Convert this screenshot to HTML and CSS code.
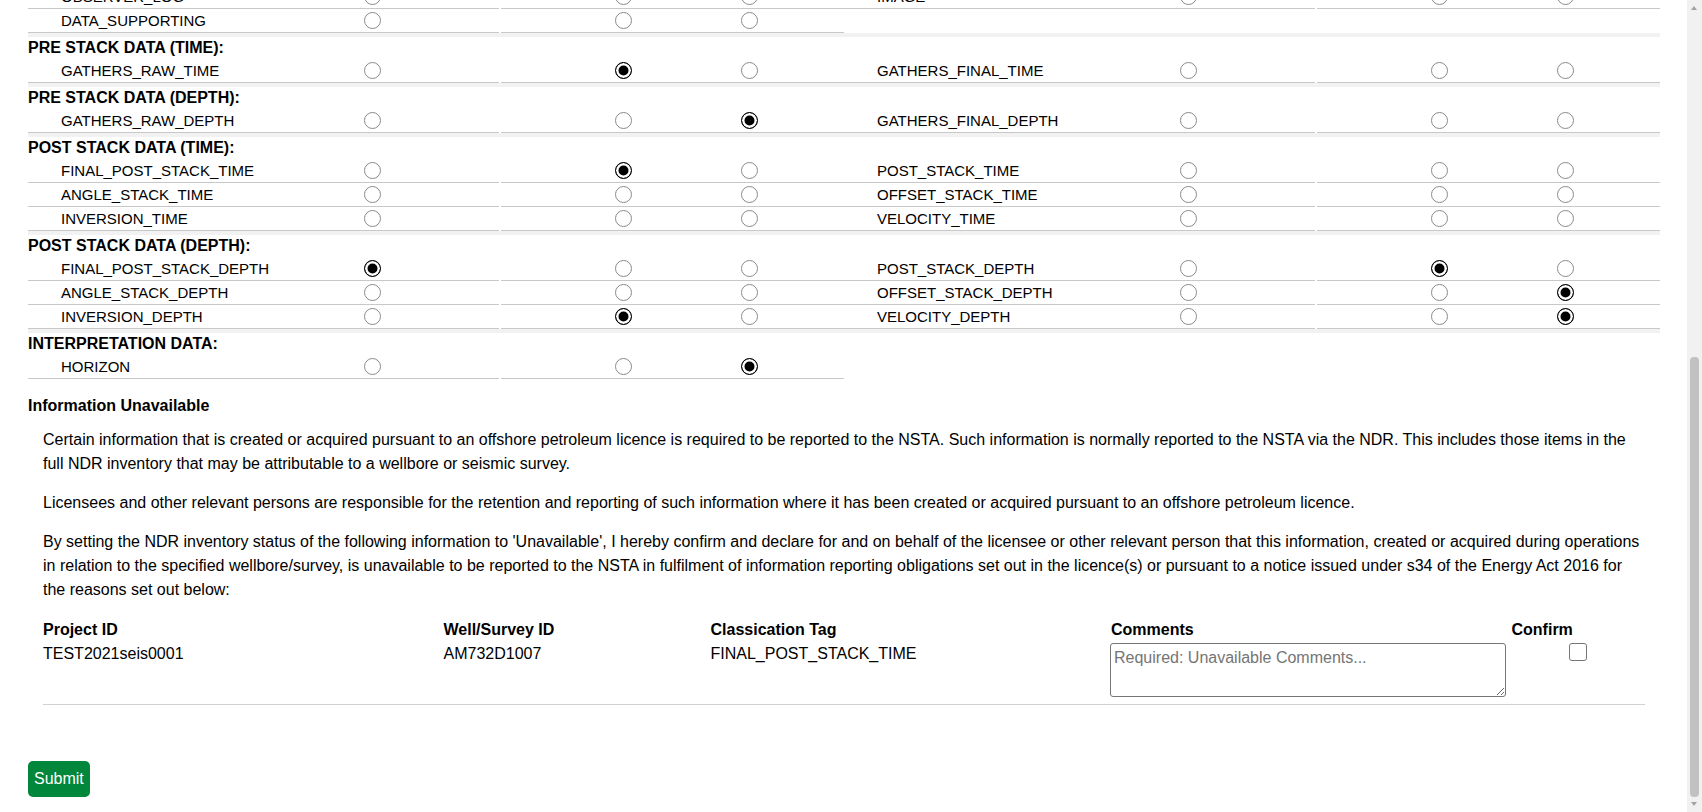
FILE: index.html
```html
<!DOCTYPE html>
<html lang="en">

<head>
  <meta charset="UTF-8" />
  <meta name="viewport" content="width=device-width, initial-scale=1.0" />
  <title>NDR Inventory</title>
  <link rel="stylesheet" href="styles.css">
</head>

<body>
  <div class="page">
    <!-- inventory status, scrolled part way down -->
    <div class="inventory">
      <section class="group group-cut">
        <div class="group-cols">
          <div class="col">
            <div class="row">
              <span class="label">OBSERVER_LOG</span>
              <span class="cell c1"><input class="radio" type="radio" name="obs"></span>
              <span class="cell c2"><input class="radio" type="radio" name="obs"></span>
              <span class="cell c3"><input class="radio" type="radio" name="obs"></span>
            </div>
            <div class="row">
              <span class="label">DATA_SUPPORTING</span>
              <span class="cell c1"><input class="radio" type="radio" name="ds"></span>
              <span class="cell c2"><input class="radio" type="radio" name="ds"></span>
              <span class="cell c3"><input class="radio" type="radio" name="ds"></span>
            </div>
          </div>
          <div class="col">
            <div class="row">
              <span class="label">IMAGE</span>
              <span class="cell c1"><input class="radio" type="radio" name="img"></span>
              <span class="cell c2"><input class="radio" type="radio" name="img"></span>
              <span class="cell c3"><input class="radio" type="radio" name="img"></span>
            </div>
          </div>
        </div>
      </section>

      <section class="group">
        <div class="group-title">PRE STACK DATA (TIME):</div>
        <div class="group-cols">
          <div class="col">
            <div class="row">
              <span class="label">GATHERS_RAW_TIME</span>
              <span class="cell c1"><input class="radio" type="radio" name="grt"></span>
              <span class="cell c2"><input class="radio" type="radio" name="grt" checked></span>
              <span class="cell c3"><input class="radio" type="radio" name="grt"></span>
            </div>
          </div>
          <div class="col">
            <div class="row">
              <span class="label">GATHERS_FINAL_TIME</span>
              <span class="cell c1"><input class="radio" type="radio" name="gft"></span>
              <span class="cell c2"><input class="radio" type="radio" name="gft"></span>
              <span class="cell c3"><input class="radio" type="radio" name="gft"></span>
            </div>
          </div>
        </div>
      </section>

      <section class="group">
        <div class="group-title">PRE STACK DATA (DEPTH):</div>
        <div class="group-cols">
          <div class="col">
            <div class="row">
              <span class="label">GATHERS_RAW_DEPTH</span>
              <span class="cell c1"><input class="radio" type="radio" name="grd"></span>
              <span class="cell c2"><input class="radio" type="radio" name="grd"></span>
              <span class="cell c3"><input class="radio" type="radio" name="grd" checked></span>
            </div>
          </div>
          <div class="col">
            <div class="row">
              <span class="label">GATHERS_FINAL_DEPTH</span>
              <span class="cell c1"><input class="radio" type="radio" name="gfd"></span>
              <span class="cell c2"><input class="radio" type="radio" name="gfd"></span>
              <span class="cell c3"><input class="radio" type="radio" name="gfd"></span>
            </div>
          </div>
        </div>
      </section>

      <section class="group">
        <div class="group-title">POST STACK DATA (TIME):</div>
        <div class="group-cols">
          <div class="col">
            <div class="row">
              <span class="label">FINAL_POST_STACK_TIME</span>
              <span class="cell c1"><input class="radio" type="radio" name="fpst"></span>
              <span class="cell c2"><input class="radio" type="radio" name="fpst" checked></span>
              <span class="cell c3"><input class="radio" type="radio" name="fpst"></span>
            </div>
            <div class="row">
              <span class="label">ANGLE_STACK_TIME</span>
              <span class="cell c1"><input class="radio" type="radio" name="ast"></span>
              <span class="cell c2"><input class="radio" type="radio" name="ast"></span>
              <span class="cell c3"><input class="radio" type="radio" name="ast"></span>
            </div>
            <div class="row">
              <span class="label">INVERSION_TIME</span>
              <span class="cell c1"><input class="radio" type="radio" name="it"></span>
              <span class="cell c2"><input class="radio" type="radio" name="it"></span>
              <span class="cell c3"><input class="radio" type="radio" name="it"></span>
            </div>
          </div>
          <div class="col">
            <div class="row">
              <span class="label">POST_STACK_TIME</span>
              <span class="cell c1"><input class="radio" type="radio" name="pst"></span>
              <span class="cell c2"><input class="radio" type="radio" name="pst"></span>
              <span class="cell c3"><input class="radio" type="radio" name="pst"></span>
            </div>
            <div class="row">
              <span class="label">OFFSET_STACK_TIME</span>
              <span class="cell c1"><input class="radio" type="radio" name="ost"></span>
              <span class="cell c2"><input class="radio" type="radio" name="ost"></span>
              <span class="cell c3"><input class="radio" type="radio" name="ost"></span>
            </div>
            <div class="row">
              <span class="label">VELOCITY_TIME</span>
              <span class="cell c1"><input class="radio" type="radio" name="vt"></span>
              <span class="cell c2"><input class="radio" type="radio" name="vt"></span>
              <span class="cell c3"><input class="radio" type="radio" name="vt"></span>
            </div>
          </div>
        </div>
      </section>

      <section class="group">
        <div class="group-title">POST STACK DATA (DEPTH):</div>
        <div class="group-cols">
          <div class="col">
            <div class="row">
              <span class="label">FINAL_POST_STACK_DEPTH</span>
              <span class="cell c1"><input class="radio" type="radio" name="fpsd" checked></span>
              <span class="cell c2"><input class="radio" type="radio" name="fpsd"></span>
              <span class="cell c3"><input class="radio" type="radio" name="fpsd"></span>
            </div>
            <div class="row">
              <span class="label">ANGLE_STACK_DEPTH</span>
              <span class="cell c1"><input class="radio" type="radio" name="asd"></span>
              <span class="cell c2"><input class="radio" type="radio" name="asd"></span>
              <span class="cell c3"><input class="radio" type="radio" name="asd"></span>
            </div>
            <div class="row">
              <span class="label">INVERSION_DEPTH</span>
              <span class="cell c1"><input class="radio" type="radio" name="id"></span>
              <span class="cell c2"><input class="radio" type="radio" name="id" checked></span>
              <span class="cell c3"><input class="radio" type="radio" name="id"></span>
            </div>
          </div>
          <div class="col">
            <div class="row">
              <span class="label">POST_STACK_DEPTH</span>
              <span class="cell c1"><input class="radio" type="radio" name="psd"></span>
              <span class="cell c2"><input class="radio" type="radio" name="psd" checked></span>
              <span class="cell c3"><input class="radio" type="radio" name="psd"></span>
            </div>
            <div class="row">
              <span class="label">OFFSET_STACK_DEPTH</span>
              <span class="cell c1"><input class="radio" type="radio" name="osd"></span>
              <span class="cell c2"><input class="radio" type="radio" name="osd"></span>
              <span class="cell c3"><input class="radio" type="radio" name="osd" checked></span>
            </div>
            <div class="row">
              <span class="label">VELOCITY_DEPTH</span>
              <span class="cell c1"><input class="radio" type="radio" name="vd"></span>
              <span class="cell c2"><input class="radio" type="radio" name="vd"></span>
              <span class="cell c3"><input class="radio" type="radio" name="vd" checked></span>
            </div>
          </div>
        </div>
      </section>

      <section class="group">
        <div class="group-title">INTERPRETATION DATA:</div>
        <div class="group-cols">
          <div class="col">
            <div class="row">
              <span class="label">HORIZON</span>
              <span class="cell c1"><input class="radio" type="radio" name="hz"></span>
              <span class="cell c2"><input class="radio" type="radio" name="hz"></span>
              <span class="cell c3"><input class="radio" type="radio" name="hz" checked></span>
            </div>
          </div>
          <div class="col"></div>
        </div>
      </section>
    </div>

    <!-- declaration for unavailable items -->
    <section class="unavailable">
      <h4>Information Unavailable</h4>
      <div class="unavailable-body">
        <p>Certain information that is created or acquired pursuant to an offshore petroleum licence is required to be reported to the NSTA. Such information is normally reported to the NSTA via the NDR. This includes those items in the full NDR inventory that may be attributable to a wellbore or seismic survey.</p>
        <p>Licensees and other relevant persons are responsible for the retention and reporting of such information where it has been created or acquired pursuant to an offshore petroleum licence.</p>
        <p>By setting the NDR inventory status of the following information to 'Unavailable', I hereby confirm and declare for and on behalf of the licensee or other relevant person that this information, created or acquired during operations in relation to the specified wellbore/survey, is unavailable to be reported to the NSTA in fulfilment of information reporting obligations set out in the licence(s) or pursuant to a notice issued under s34 of the Energy Act 2016 for the reasons set out below:</p>

        <div class="detail-grid">
          <div class="detail-head">Project ID</div>
          <div class="detail-head">Well/Survey ID</div>
          <div class="detail-head">Classication Tag</div>
          <div class="detail-head">Comments</div>
          <div class="detail-head">Confirm</div>

          <div class="detail-value">TEST2021seis0001</div>
          <div class="detail-value">AM732D1007</div>
          <div class="detail-value">FINAL_POST_STACK_TIME</div>
          <div class="detail-value">
            <textarea class="comments" placeholder="Required: Unavailable Comments..."></textarea>
          </div>
          <div class="detail-value confirm">
            <input class="check" type="checkbox">
          </div>
        </div>
      </div>
    </section>

    <button class="submit">Submit</button>
  </div>

  <!-- browser scrollbar -->
  <div class="scrollbar">
    <span class="arrow-up"></span>
    <span class="thumb"></span>
    <span class="arrow-down"></span>
  </div>
</body>

</html>
```

FILE: styles.css
```css
html,
body {
  margin: 0;
  padding: 0;
  height: 100%;
  overflow: hidden;
}

body {
  font-family: "Liberation Sans", Arial, sans-serif;
  color: #000;
  background: #fff;
}

.page {
  margin-right: 15px;
  padding: 0 27px 0 28px;
}

/* inventory groups */

.group {
  border-top: 4px solid #f2f2f2;
}

.group-cut {
  border-top: 0;
  margin-top: -15px;
}

.group-title {
  font-size: 16px;
  font-weight: bold;
  line-height: 22px;
}

.group-cols {
  display: grid;
  grid-template-columns: 1fr 1fr;
}

.row {
  display: grid;
  grid-template-columns: 333px 138px 239px 1fr;
  font-size: 15px;
}

.label,
.cell {
  display: flex;
  align-items: center;
  height: 23px;
  border-bottom: 1px solid #c8c8c8;
}

.label {
  padding-left: 33px;
}

.c1 {
  padding-left: 3px;
}

.c2 {
  margin-left: 2px;
  padding-left: 114px;
}

.c3 {
  padding-left: 3px;
}

.radio {
  -webkit-appearance: none;
  appearance: none;
  box-sizing: border-box;
  width: 17px;
  height: 17px;
  margin: 0;
  border: 1px solid #8a8a8a;
  border-radius: 50%;
  background: #fff;
}

.radio:checked {
  border: 1.5px solid #000;
  background: #000;
  box-shadow: inset 0 0 0 2.5px #fff;
}

/* information unavailable */

.unavailable h4 {
  font-size: 16px;
  line-height: 24px;
  margin: 15px 0 10px;
}

.unavailable-body {
  padding: 0 15px;
}

.unavailable p {
  font-size: 16px;
  line-height: 24px;
  margin: 0 0 15px;
}

.detail-grid {
  display: grid;
  grid-template-columns: 3fr 2fr 3fr 3fr 1fr;
  margin-top: 16px;
  padding-bottom: 7px;
  border-bottom: 1px solid #d0d0d0;
  font-size: 16px;
  line-height: 24px;
}

.detail-head {
  font-weight: bold;
}

.comments {
  display: block;
  box-sizing: border-box;
  width: 396px;
  height: 54px;
  margin: 1px 0 0 -1px;
  padding: 4px 3px 2px;
  border: 1px solid #767676;
  border-radius: 3px;
  font-family: "Liberation Sans", Arial, sans-serif;
  font-size: 16px;
  line-height: 20px;
}

.comments::placeholder {
  color: #757575;
}

.confirm {
  display: flex;
  justify-content: center;
}

.check {
  -webkit-appearance: none;
  appearance: none;
  box-sizing: border-box;
  width: 18px;
  height: 18px;
  margin: 1px 0 0;
  border: 1px solid #767676;
  border-radius: 3px;
  background: #fff;
}

.submit {
  margin-top: 56px;
  height: 36px;
  padding: 0 6px;
  background: #00873c;
  color: #fff;
  border: none;
  border-radius: 5px;
  font-family: "Liberation Sans", Arial, sans-serif;
  font-size: 16px;
  cursor: pointer;
}

/* scrollbar */

.scrollbar {
  position: fixed;
  top: 0;
  right: 0;
  width: 15px;
  height: 100%;
  background: #f1f1f1;
}

.thumb {
  position: absolute;
  left: 3px;
  top: 357px;
  width: 9px;
  height: 440px;
  border-radius: 4px;
  background: #c1c1c1;
}

.arrow-up,
.arrow-down {
  position: absolute;
  left: 4px;
  width: 0;
  height: 0;
  border-left: 3.5px solid transparent;
  border-right: 3.5px solid transparent;
}

.arrow-up {
  top: 6px;
  border-bottom: 4px solid #a3a3a3;
}

.arrow-down {
  bottom: 6px;
  border-top: 4px solid #a3a3a3;
}
```
